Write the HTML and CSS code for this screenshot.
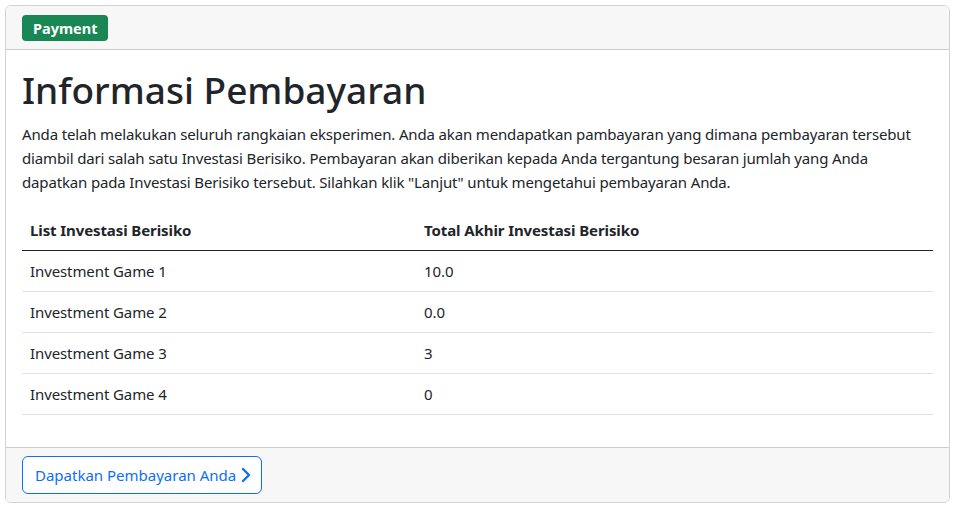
FILE: index.html
```html
<!DOCTYPE html>
<html lang="id">
<head>
<meta charset="utf-8">
<title>Payment</title>
<link rel="stylesheet" href="styles.css">
</head>
<body>
<div class="card">
  <div class="card-header">
    <span class="badge">Payment</span>
  </div>
  <div class="card-body">
    <h1 class="title">Informasi Pembayaran</h1>
    <p class="intro">Anda telah melakukan seluruh rangkaian eksperimen. Anda akan mendapatkan pambayaran yang dimana pembayaran tersebut diambil dari salah satu Investasi Berisiko. Pembayaran akan diberikan kepada Anda tergantung besaran jumlah yang Anda dapatkan pada Investasi Berisiko tersebut. Silahkan klik "Lanjut" untuk mengetahui pembayaran Anda.</p>
    <table class="table">
      <thead>
        <tr><th class="col-name">List Investasi Berisiko</th><th>Total Akhir Investasi Berisiko</th></tr>
      </thead>
      <tbody>
        <tr><td>Investment Game 1</td><td>10.0</td></tr>
        <tr><td>Investment Game 2</td><td>0.0</td></tr>
        <tr><td>Investment Game 3</td><td>3</td></tr>
        <tr><td>Investment Game 4</td><td>0</td></tr>
      </tbody>
    </table>
  </div>
  <div class="card-footer">
    <button class="btn" type="button">Dapatkan Pembayaran Anda <svg class="chev" width="10" height="16" viewBox="0 0 10 16" aria-hidden="true"><path d="M2 2 L8 8 L2 14" fill="none" stroke="currentColor" stroke-width="2.4" stroke-linecap="round" stroke-linejoin="round"/></svg></button>
  </div>
</div>
</body>
</html>
```
FILE: styles.css
```css
* { box-sizing: border-box; }
body {
  margin: 5px 9px 0 5px;
  font-family: "Noto Sans", "Open Sans", sans-serif;
  font-size: 15px;
  line-height: 1.5;
  color: #212529;
  background: #fff;
}
.card {
  border: 1px solid rgba(0,0,0,0.175);
  border-radius: 6px;
  overflow: hidden;
  height: 498px;
  display: flex;
  flex-direction: column;
}
.card-header {
  background: #f7f7f7;
  border-bottom: 1px solid rgba(0,0,0,0.175);
  padding: 9px 16px 7px;
  height: 44px;
}
.badge {
  display: inline-block;
  background: #198754;
  color: #fff;
  font-weight: 700;
  font-size: 14.5px;
  line-height: 1;
  padding: 5.5px 11px;
  border-radius: 4px;
}
.card-body {
  padding: 16px;
  flex: 1;
}
.title {
  margin: 0 0 8px;
  font-size: 37px;
  font-weight: 500;
  line-height: 48px;
}
.intro {
  margin: 0 0 16px;
  line-height: 24px;
  letter-spacing: -0.15px;
}
.table {
  width: 100%;
  border-collapse: collapse;
  letter-spacing: -0.1px;
}
.table th, .table td {
  text-align: left;
  padding: 8px;
  line-height: 24px;
  border-bottom: 1px solid #dee2e6;
}
.table th {
  font-weight: 700;
  border-bottom: 1px solid #212529;
}
.col-name { width: 394px; }
.card-footer {
  background: #f7f7f7;
  border-top: 1px solid rgba(0,0,0,0.175);
  padding: 8px 16px;
  height: 55px;
}
.btn {
  font-family: inherit;
  font-size: 15px;
  line-height: 24px;
  color: #0d6efd;
  background: #fff;
  border: 1px solid #0d6efd;
  border-radius: 6px;
  padding: 6px 12px;
  height: 38px;
  width: 240px;
  display: flex;
  align-items: center;
  gap: 5px;
  white-space: nowrap;
}
.chev { flex: none; }
```
